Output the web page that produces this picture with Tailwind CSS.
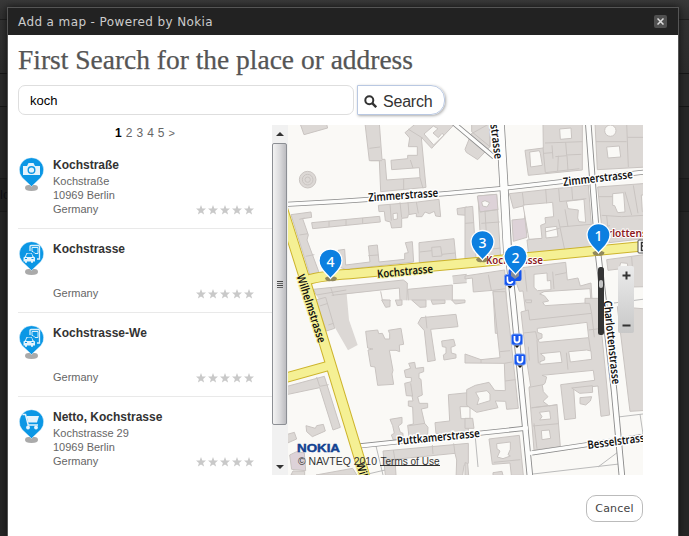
<!DOCTYPE html>
<html lang="en">
<head>
<meta charset="utf-8">
<title>Add a map</title>
<script src="https://cdn.jsdelivr.net/npm/@tailwindcss/browser@4"></script>
</head>
<body class="relative h-[536px] w-[689px] overflow-hidden bg-[#292929] font-['Liberation_Sans',sans-serif]">
<!-- dimmed page behind the dialog -->
<div class="absolute inset-0 flex flex-col">
  <div class="h-5 border-b border-[#1e1e1e] bg-linear-to-b from-[#393939] to-[#2e2e2e]"></div>
  <div class="h-[54px] border-b border-[#161616] bg-linear-to-b from-[#323232] to-[#2c2c2c]"></div>
  <div class="h-[33px] border-b border-[#161616] bg-[#2a2a2a]"></div>
  <div class="h-[71px] bg-[#272727]"></div>
  <div class="flex h-[34px] items-center border-y border-[#1b1b1b] bg-[#222] text-[13px] text-[#0b0b12]">lo</div>
  <div class="flex-1 bg-[#262626]"></div>
</div>

<main class="relative ml-[7px] mt-[7px] flex h-[529px] w-[672px] flex-col border border-b-0 border-[#555] bg-white shadow-[0_0_7px_#111]">
  <header class="flex h-[27px] shrink-0 items-center justify-between bg-[#222] pl-[10px] pr-[11px]">
    <span class="font-['DejaVu_Sans',sans-serif] text-[12px] tracking-[0.39px] text-[#ccc]">Add a map - Powered by Nokia</span>
    <button class="flex size-[13px] items-center justify-center rounded-[2px] bg-[#505050]"><svg width="7" height="7" viewBox="0 0 7 7"><path d="M.5.5l6 6M6.5.5l-6 6" stroke="#ddd" stroke-width="1.500"/></svg></button>
  </header>

  <h1 class="h-[50px] shrink-0 pl-[10px]"><svg width="400" height="50"><text x="0" y="34" textLength="395" lengthAdjust="spacingAndGlyphs" font-family="Liberation Serif, serif" font-size="26.500" fill="#555" stroke="#555" stroke-width=".25">First Search for the place or address</text></svg></h1>

  <div class="flex h-[30px] shrink-0 gap-[3px] pl-[10px]">
    <div class="flex w-[336px] items-center rounded-[7px] border border-[#dedede] pl-[11px] pt-[2px] text-[13px] text-black">koch</div>
    <button class="flex w-[88px] items-center gap-[6px] rounded-r-[14px] border border-[#b9c8e2] pl-[6px] pt-[3px] text-[16px] text-[#333] shadow-[1px_1px_3px_#aaa]"><svg width="13" height="13" viewBox="0 0 13 13" fill="none" stroke="#333"><circle cx="5.300" cy="5.300" r="4" stroke-width="2"/><path d="M8.200 8.200l4 4" stroke-width="2.400"/></svg><span class="tracking-[-0.2px]">Search</span></button>
  </div>

  <div class="mt-[10px] flex h-[350px] shrink-0 pl-[10px]">
    <section class="w-[254px] overflow-hidden">
      <nav class="flex h-5 justify-center gap-[4px] pt-[1px] text-[12px] leading-[14px] text-[#666]"><b class="text-black">1</b><span>2</span><span>3</span><span>4</span><span>5</span><span class="text-[11px]">&gt;</span></nav>
      <ul id="places"></ul>
    </section>

    <!-- scrollbar -->
    <div class="flex w-4 flex-col bg-[#f1f1f1]">
      <div class="flex h-[18px] items-center justify-center"><svg width="8" height="4"><path d="M0 4L4 0l4 4z" fill="#333"/></svg></div>
      <div class="flex h-[282px] w-[15px] flex-col items-center justify-center gap-[1px] rounded-[2px] border border-[#8c8f94] bg-linear-to-r from-[#f3f3f3] via-[#dcdcde] to-[#bcbcc0]">
        <i class="h-px w-[6px] bg-[#444]"></i><i class="h-px w-[6px] bg-[#666]"></i><i class="h-px w-[6px] bg-[#444]"></i><i class="h-px w-[6px] bg-[#666]"></i>
      </div>
      <div class="flex h-[50px] items-end justify-center pb-[6px]"><svg width="8" height="4"><path d="M0 0h8L4 4z" fill="#333"/></svg></div>
    </div>

    <svg width="355" height="350" viewBox="288 125 355 350" font-family="Noto Sans, Open Sans, sans-serif">
      <defs>
        <g id="pin"><path d="M0 17C-3.500 12-11.500 8-11.500-1A11.500 11.500 0 0 1 11.500-1C11.500 8 3.500 12 0 17Z" fill="#0c7fe0" stroke="#fff" stroke-width="1.300"/></g>
        <g id="shade"><path d="M-6-1q3-3 6 0q3-3 6 0q-1 4-6 3q-5 1-6-3z" fill="#91895b"/></g>
        <g id="u"><rect x="-5.500" y="-5.500" width="11" height="11" rx="2" fill="#1756ed" stroke="#7ba2f5"/><path d="M-2.500-3.500V.5a2.500 2.500 0 0 0 5 0V-3.500" fill="none" stroke="#fff" stroke-width="1.800"/><path d="M-2.500 6h5L0 8.500z" fill="#111"/></g>
      </defs>
      <rect x="288" y="125" width="355" height="350" fill="#faf9f6"/>

      <!-- buildings, north-west -->
      <g transform="translate(285 120) scale(.33333)" fill="#dcd8d5" stroke="#c9c4c1" stroke-width="3">
        <path d="M45 10L57 44 128 24 124 10ZM240 10L253 122H283L287 215 423 202 409 52 440 85 511 10H393L360 38 374 54 370 80H397V106H368V116L318 121 320 149 403 143 405 173 305 180 300 118H291L283 10Z"/>
        <path d="M417 42l28-24 14 8-15 13 16 14 11-13 6 5-31 30z" fill="#faf9f6"/>
        <path d="M253 85L285 81M257 122H291M356 177v30M405 173l9 32M376 120l8 24M369 27l45 28" fill="none"/>
        <circle cx="68" cy="179" r="25"/><circle cx="68" cy="179" r="16" fill="none"/><circle cx="68" cy="179" r="8" fill="none"/>
        <path d="M18 284L78 276 80 292 53 296 70 345 66 360 102 457 75 465ZM80 308L284 289 286 306 83 326ZM280 256L398 246 462 238 467 290 452 288 448 274 433 281 420 276 411 290H394V280L370 284 368 293 350 295V322L320 324 316 306 301 302 298 274 282 275ZM516 266l30-5v25l-28-2zM402 368L507 356 513 419 403 428ZM250 378L277 375 282 426 359 418V400L370 398 361 368 382 365 386 426 182 448 159 440V391L179 388 182 435 255 426Z"/>
        <path d="M324 281l13-2v18l-12 2z" fill="#faf9f6"/>
        <path d="M440 382l27-2 4 28-29 2zM132 303v17M183 299v17M233 294v17M43 298l16-4M43 345l26-4M62 409l26-5M315 252l4 50M345 247l5 46M369 247l3 36M394 246l6 34M404 396l36-4M471 403l40-4M250 407l30-2" fill="none"/>
        <path d="M85 508L355 480 367 489 366 541H345L343 504 185 522 192 600 218 675 189 691 94 525ZM368 508L502 495V541H370ZM502 468l43-5v25l-40 3z" stroke="none"/>
        <path d="M85 508L355 480 367 489 366 541M345 541L343 504 140 526M370 541L368 508 502 495V541M85 508l9 17M502 468l43-5M505 491l40-3" fill="none"/>
        <path d="M287 514l5 26 25 2M137 503l9 25M94 525l90-15" fill="none"/>
      </g>
      <!-- buildings, north-east -->
      <g transform="translate(465 120) scale(.33333)" fill="#dcd8d5" stroke="#c9c4c1" stroke-width="3">
        <path d="M0 88L10 63 18 42 75 10V80L38 119 4 97ZM20 10H75V80L20 35ZM234 10H352V150L190 166 180 91 235 84ZM390 10H545V141L397 149Z"/>
        <path d="M284 27l34-3 2 31-34 3zM194 96l29-4 3 8 6 36-35 5zM425 81l38-3 4 33-38 3z" fill="#faf9f6"/><circle cx="436" cy="32" r="17" fill="#faf9f6"/>
        <path d="M240 69l113-4M234 83l7 75M280 107l-2 46M241 158l102-12M261 76l3 40M302 67l3 38 44-2M271 110l35-3 3 45M236 100l26-2M485 10l5 131M393 65h92M487 52h50" fill="none"/>
        <path d="M133 221L370 195 384 378 191 405 186 360 222 354 219 335 180 337 178 257 145 265ZM398 201L545 190V355L415 370Z"/>
        <path d="M174 255l89-8 3 43-26 3 2 17-15 6 4 39-39 3zM304 244l53-6 5 69-20-2-4-11 2-24-31-4zM241 323l34-4 4 31-36 4zM443 221l33-3 4 58-22 2-9-21-6-1zM529 225h20v50h-17z" fill="#faf9f6"/>
        <path d="M172 217l5 40M242 207l3 43M281 205l3 40 80-9M284 325l-44 11M280 298l20 96M285 321l94-8M300 268l9 52M400 230h43M410 286l60 4 65-4M425 287l8 80M480 215l20 70M505 196l14 84M320 200l3 39M415 321l20-4" fill="none"/>
        <path d="M0 262L23 259 34 428H0ZM39 228L95 223 107 414 50 424Z"/>
        <path d="M37 228l58-5 4 46-54 7z" fill="#ddd2d8"/><path d="M50 246l10-4 14 6-8 13-13-3z" fill="#faf9f6"/>
        <path d="M44 276l56-8M49 310l55-4M0 310l27-2M60 272l6 100M50 391l56-7" fill="none"/>
        <path d="M141 300L180 296 186 352 145 364Z" fill="#ddd2d8"/>
        <path d="M0 468L119 450 130 640 91 640 84 511 25 516 22 474 0 477ZM139 447L302 427 307 480 339 474 346 498 378 489 387 640H190L174 513 163 514ZM425 419L545 403V500L497 501 487 430 467 428 462 447 429 451Z"/>
        <path d="M207 463l39-4 1 24 10-2 1 28-41 3-10-10zM237 515l138-9 3 42-138 9-7-10 18-4-13-16-14-5z" fill="#faf9f6"/>
        <path d="M70 464l9 47M84 511l38-5M263 455l4 52M179 450l7 65M270 465l34-7M500 410l6 90" fill="none"/>
      </g>
      <!-- buildings, south-west -->
      <g transform="translate(265 300) scale(.33333)" fill="#dcd8d5" stroke="#c9c4c1" stroke-width="3">
        <path d="M152 0L182 -8 209 85 184 93ZM350 0H375V20L362 22ZM391 0H411V15L397 17ZM440 0H483V21L465 22ZM498 0H540V10L503 13ZM560 0H600V8L571 12ZM302 94L338 90 341 101 352 100 360 117H374V101L370 91 408 85 416 133 403 135 404 155 393 151H373L384 211 381 222 386 253 338 256 330 201 317 199 309 150 324 147 308 144ZM459 70L468 53 573 43 579 80 497 88 511 181 488 185 478 92ZM530 123L566 118 571 137 558 142 559 159 573 163V174L537 180 535 165 543 160V142L532 140ZM418 211L437 205 431 190 449 187 452 205 476 202V215L462 220V235L468 238 472 285 458 291 463 310H488V323L469 327 479 370 489 382 488 405 433 418 428 376 445 372 443 321 430 318V303H444L441 288 424 287 419 250 439 245V233L422 232ZM375 358L411 352V370L400 378 406 397 414 400V417L385 420 379 405 388 400 383 377ZM550 284L610 278V397L513 401 510 368 554 363Z"/>
        <path d="M585 320h30v36h-27z" fill="#faf9f6"/>
        <path d="M55 262L178 229 226 382 204 390 164 263 60 285ZM123 377L151 385 155 377 175 373 181 393 142 410 125 395ZM67 403L88 397 95 417 68 429Z"/>
        <path d="M74 465L95 455 118 459 122 512 80 508Z" fill="#ddd2d8"/>
        <path d="M78 525l6-12 35 1v15zM153 525L263 505 276 526ZM354 453L610 430V490L597 496 593 526H361Z"/>
        <path d="M390 478l180-18 5 20-2 60H394z" fill="#faf9f6"/>
        <path d="M155 231l9 28 27-5M164 18l25-8M190 75l15-5M482 47l4 38M437 250l6 40M432 377l48-7M385 450l5 30M502 435l2 27M566 430l4 31" fill="none"/>
      </g>
      <!-- buildings, south-east -->
      <g transform="translate(465 300) scale(.33333)" fill="#dcd8d5" stroke="#c9c4c1" stroke-width="3">
        <path d="M84 -25L122 -25 160 325 125 328 122 304 91 303 99 323 35 337 5 316V269L31 256 72 247 89 271 121 272 118 190 0 189V162L48 179 105 173ZM168 36L190 30 194 60 380 40 374 10H360V-5H400L434 345 408 349 399 258 326 266 332 355 299 359 287 254 389 241 385 211 231 226 245 231 240 250 232 256 235 275 249 290 234 304 252 318 276 314 286 440 207 450 192 262 197 258 183 170ZM457 20L545 27V331L495 334ZM0 355H23L27 385H0ZM72 417L163 406 175 526H139L135 489 82 493ZM0 488l8 2 3 36H0zM84 518l27-4 3 12H84z"/>
        <path d="M32 277L66 272 75 282V302L36 314 42 296ZM217 85L366 67 371 113 223 127 219 119 231 114V102L217 97ZM226 161L286 155 291 187 225 193V185L239 180V171ZM311 155L365 150 378 153 380 178 316 186ZM223 337l31-4 3 24-33 3 7-10zM229 392l24-2 4 25-26 4zM95 431l41-5v22l-7 16 7 4-22 8-17-5 8-18-9-7z" fill="#faf9f6"/>
        <path d="M320 264l62-7 1 20-39 3zM345 293l35-3-4 13-14 12-17-4zM180 0h20l-1 8h-15z"/>
        <path d="M176 99l36-4 5 25M190 140l3 42M216 120l4 70M371 113l6 40M380 40l8 72M371 90l32-4M304 158l5 51M192 262l43-8M200 323l50-6M203 378l78-7M207 370l9 76M277 314l-78 10M120 243l32-4M105 155l30-3M118 190l23-4M48 179v10M86 487l80-8" fill="none"/>
      </g>

      <!-- property lines -->
      <g fill="none" stroke="#bbb"><path d="M376 446l7 29M368 474l17-4M618 417l25-3M640 414l3 20M533 474l86-10M598 467l20-15M475 434l3 33M614 303l31-4"/></g>
      <!-- minor roads -->
      <g fill="none" stroke="#8b8b8b"><path stroke-width="5" d="M287 204.300Q394 199 502 188.500L645 172M358 446L528 428M532 453L645 436M450 120L494 157"/><path stroke-width="9" d="M500 120L504 187 508 258"/><path stroke-width="6.500" d="M509 262L513 300 530 477M588 120L593 187 598 253 614 390 622 477"/></g>
      <g fill="none" stroke="#fdfdfc"><path stroke-width="3.400" d="M287 204.300Q394 199 502 188.500L645 172M350 447L528 428M528 453.500L645 436M450 120L494 157"/><path stroke-width="7.400" d="M500 120L504 187 508 262"/><path stroke-width="4.700" d="M508 255L513 300 530 477M588 120L593 187 598 253 614 390 622 477"/></g>
      <!-- main roads -->
      <g fill="none" stroke="#cdb42c"><path stroke-width="11" d="M282 207L306 283 365 477"/><path stroke-width="10.500" d="M285 378L328 366M302 282Q315 276 350 274L480 262 645 246"/></g>
      <g fill="none" stroke="#f5f094"><path stroke-width="9" d="M282 207L306 283 365 477"/><path stroke-width="8.500" d="M285 378L328 366M302 282Q315 276 350 274L480 262 645 246"/></g>

      <!-- street names -->
      <g font-size="11.500" font-weight="600" fill="#111" stroke="#fff" stroke-width="3" stroke-linejoin="round" paint-order="stroke">
        <text transform="translate(368.500 201.500) rotate(-4)" textLength="70" lengthAdjust="spacingAndGlyphs">Zimmerstrasse</text>
        <text transform="translate(563.500 186) rotate(-6.500)" textLength="70" lengthAdjust="spacingAndGlyphs">Zimmerstrasse</text>
        <text transform="translate(397.500 445) rotate(-5.500)" textLength="83" lengthAdjust="spacingAndGlyphs">Puttkamerstrasse</text>
        <text transform="translate(588 449) rotate(-7.500)" textLength="63" lengthAdjust="spacingAndGlyphs">Besselstrasse</text>
        <text transform="translate(603.500 301) rotate(84)" textLength="84" lengthAdjust="spacingAndGlyphs">Charlottenstrasse</text>
        <text transform="translate(485 81) rotate(83)" textLength="79" lengthAdjust="spacingAndGlyphs">Friedrichstrasse</text>
      </g>
      <g font-size="11.500" font-weight="600" fill="#111" stroke="#f5f094" stroke-width="2" paint-order="stroke">
        <text transform="translate(377.500 278) rotate(-5.500)" textLength="56" lengthAdjust="spacingAndGlyphs">Kochstrasse</text>
        <text transform="translate(296.500 276) rotate(72)" textLength="71" lengthAdjust="spacingAndGlyphs">Wilhelmstrasse</text>
        <text transform="translate(356 464) rotate(73)" textLength="71" lengthAdjust="spacingAndGlyphs">Wilhelmstrasse</text>
      </g>
      <g font-size="11.500" font-weight="600" fill="#8c1821" stroke="#fff" stroke-width="2" paint-order="stroke">
        <text x="486" y="264" textLength="57" lengthAdjust="spacingAndGlyphs">Kochstrasse</text><text x="589" y="237" textLength="88" lengthAdjust="spacingAndGlyphs">Charlottenstrasse</text>
      </g>
      <rect x="638" y="240" width="12" height="13" rx="1" fill="#fff" stroke="#555"/><path d="M645 242.500h-3.500v8h3.500M642 246h3" fill="none" stroke="#333" stroke-width="1.500"/>

      <use href="#u" x="510" y="280"/><use href="#u" x="517" y="339.500"/><use href="#u" x="520" y="359.500"/>
      <rect x="508.500" y="269" width="13" height="12" rx="2" fill="#1756ed"/><path d="M511 272h8v4l-4 3-4-3z" fill="#858c99"/>
      <use href="#shade" x="331" y="279"/><use href="#shade" x="482" y="260"/><use href="#shade" x="598.500" y="253.500"/>
      <use href="#pin" x="330.500" y="261.500"/><use href="#pin" x="482.500" y="243"/><use href="#pin" x="515.500" y="257.500"/><use href="#pin" x="598.500" y="236"/>
      <g fill="#fff" font-size="14" font-weight="500" text-anchor="middle"><text x="330.500" y="266.500">4</text><text x="482.500" y="247.500">3</text><text x="515.500" y="262.500">2</text><text x="598.500" y="240.500">1</text></g>

      <!-- zoom control -->
      <rect x="598" y="267" width="6" height="68" rx="2.500" fill="#343434"/><rect x="599" y="280" width="4" height="8" rx="2" fill="#c3c3c3"/>
      <linearGradient id="zg" x2="0" y2="1"><stop stop-color="#ebebeb"/><stop offset="1" stop-color="#c8c8c8"/></linearGradient>
      <rect x="618" y="266" width="16" height="67" rx="2" fill="url(#zg)"/><path d="M622.500 275.500h8M626.500 271.500v8M622.500 325.500h8" stroke="#333" stroke-width="2"/>

      <text x="297" y="452" font-family="Liberation Sans, sans-serif" font-size="10" font-weight="700" fill="#124191" stroke="#124191" stroke-width=".4" textLength="43" lengthAdjust="spacingAndGlyphs">NOKIA</text>
      <g font-family="Liberation Sans, sans-serif" font-size="10.500" fill="#333"><text x="298" y="464.500" textLength="79" lengthAdjust="spacingAndGlyphs">© NAVTEQ 2010</text><text x="380.500" y="464.500" textLength="59" lengthAdjust="spacingAndGlyphs">Terms of Use</text></g><path d="M380 465.500h60" stroke="#333"/>
    </svg>
  </div>

  <button class="ml-[578px] mt-[20px] flex h-[27px] w-[57px] shrink-0 items-center justify-center rounded-[10px] border border-[#bbb] pt-[1px] font-['DejaVu_Sans',sans-serif] text-[11px] tracking-[0.2px] text-[#444]">Cancel</button>
</main>

<script>
const icons = {
  camera: '<path d="M4 9h4l1.500-3h5L16 9h5v9H4z" fill="#e4f3fc"/><circle cx="12.500" cy="13" r="3.300" fill="#e4f3fc" stroke="#0b97e5" stroke-width="1.400"/>',
  transit: '<path d="M11 10V5.500q0-1 1-1h7.500q1 0 1 1V18H18" fill="none" stroke="#d9effb" stroke-width="1.300"/><path d="M13 6.500h6v6h-3l-2-2h-1z" fill="#0b97e5" stroke="#d9effb"/><path d="M4.500 16.500l1.500-1 1.500-3.500h5l2 3.500 1.500 1v4h-2v1.300h-2V20.500H8v1.300H6V20.500H4.500z" fill="#e4f3fc"/><path d="M8.500 13h3.500l1 2.500H7.500zM6 17.500h2M12.500 17.500h2" fill="#0b97e5" stroke="#0b97e5"/>',
  cart: '<path d="M3.500 5.500h3l2.700 10.500H19" fill="none" stroke="#e4f3fc" stroke-width="1.500"/><path d="M7.500 7h12.500l-2 6.500H9.300z" fill="#e4f3fc"/><circle cx="9" cy="18.500" r="1.900" fill="#e4f3fc"/><circle cx="17" cy="18.500" r="1.900" fill="#e4f3fc"/>'
};
const places = [
  ['Kochstraße', 'Kochstraße', '10969 Berlin', 'camera'],
  ['Kochstrasse', '', '', 'transit'],
  ['Kochstrasse-We', '', '', 'transit'],
  ['Netto, Kochstrasse', 'Kochstrasse 29', '10969 Berlin', 'cart']
];
const star = '<svg width="10" height="10" viewBox="0 0 10 10"><path d="M5 0l1.300 3.400L10 3.600 7.100 5.900 8.100 9.500 5 7.500 1.900 9.500 2.900 5.900 0 3.600l3.700-.2z" fill="#c9c9c9"/></svg>';
document.getElementById('places').innerHTML = places.map(([n, a, b, i]) => `
  <li class="flex h-[84px] border-b border-[#e9e9e9] pt-[12px]">
    <svg class="ml-[0.5px] shrink-0" width="25" height="35" viewBox="0 0 25 35"><path d="M6 31q0-3 3.500-3h6q3.500 0 3.500 3 0 3-6.500 3-6.500 0-6.500-3" fill="#aaa"/><path d="M12.500 29.500L3 20.500A12.200 12.200 0 1 1 22 20.500Z" fill="#0b97e5" stroke="#fff" stroke-width=".5"/>${icons[i]}</svg>
    <div class="ml-[9.5px] flex-1 text-[11px] leading-[14px] text-[#666]">
      <h2 class="mb-[1px] h-[16px] pt-[1px] text-[12px] font-bold leading-[15px] text-[#333]">${n}</h2>
      <p class="h-[14px]">${a}</p><p class="h-[14px]">${b}</p>
      <div class="flex items-center justify-between pr-[18px]"><span>Germany</span><span class="flex gap-[2px] pt-[1px]">${star.repeat(5)}</span></div>
    </div>
  </li>`).join('');
</script>
</body>
</html>
